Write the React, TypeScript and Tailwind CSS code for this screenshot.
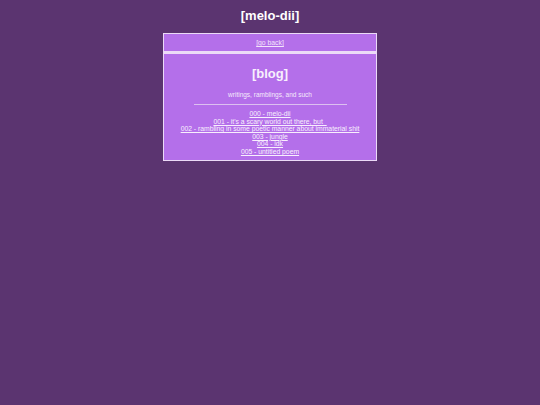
import React from "react";

const posts = [
    "000 - melo-dii",
    "001 - it's a scary world out there, but_",
    "002 - rambling in some poetic manner about immaterial shit",
    "003 - jungle",
    "004 - idk",
    "005 - untitled poem",
];

export default function App() {
    return (
        <div className="min-h-[405px] w-full bg-[#5b3470] font-['Liberation_Sans',Arial,sans-serif] text-[#f5eafc] flex flex-col items-center">
            <h1 className="mt-[7px] text-[13px] leading-[18px] font-bold text-white">[melo-dii]</h1>

            <div className="mt-[8px] w-[214px] flex flex-col">
                <div className="border border-[#ecdaf7] bg-[#b46fea] h-[19px] pt-px flex items-center justify-center">
                    <a href="#" className="text-[6.8px] leading-[8px] underline text-[#f3e4fb]">[go back]</a>
                </div>
                <div className="border border-[#ecdaf7] border-t-2 bg-[#b46fea] flex flex-col items-center pt-[12px] pb-[4px]">
                    <h2 className="text-[13px] leading-[16px] font-bold text-[#f8effd]">[blog]</h2>
                    <p className="mt-[9px] text-[6.5px] leading-[8px]">writings, ramblings, and such</p>
                    <div className="mt-[5px] w-[153px] h-px bg-[#dcc0f0]" />
                    <ul className="mt-[5px] flex flex-col items-center">
                        {posts.map((p) => (
                            <li key={p} className="text-[6.8px] leading-[7.6px]">
                                <a href="#" className="underline text-[#f8effd]">{p}</a>
                            </li>
                        ))}
                    </ul>
                </div>
            </div>
        </div>
    );
}
